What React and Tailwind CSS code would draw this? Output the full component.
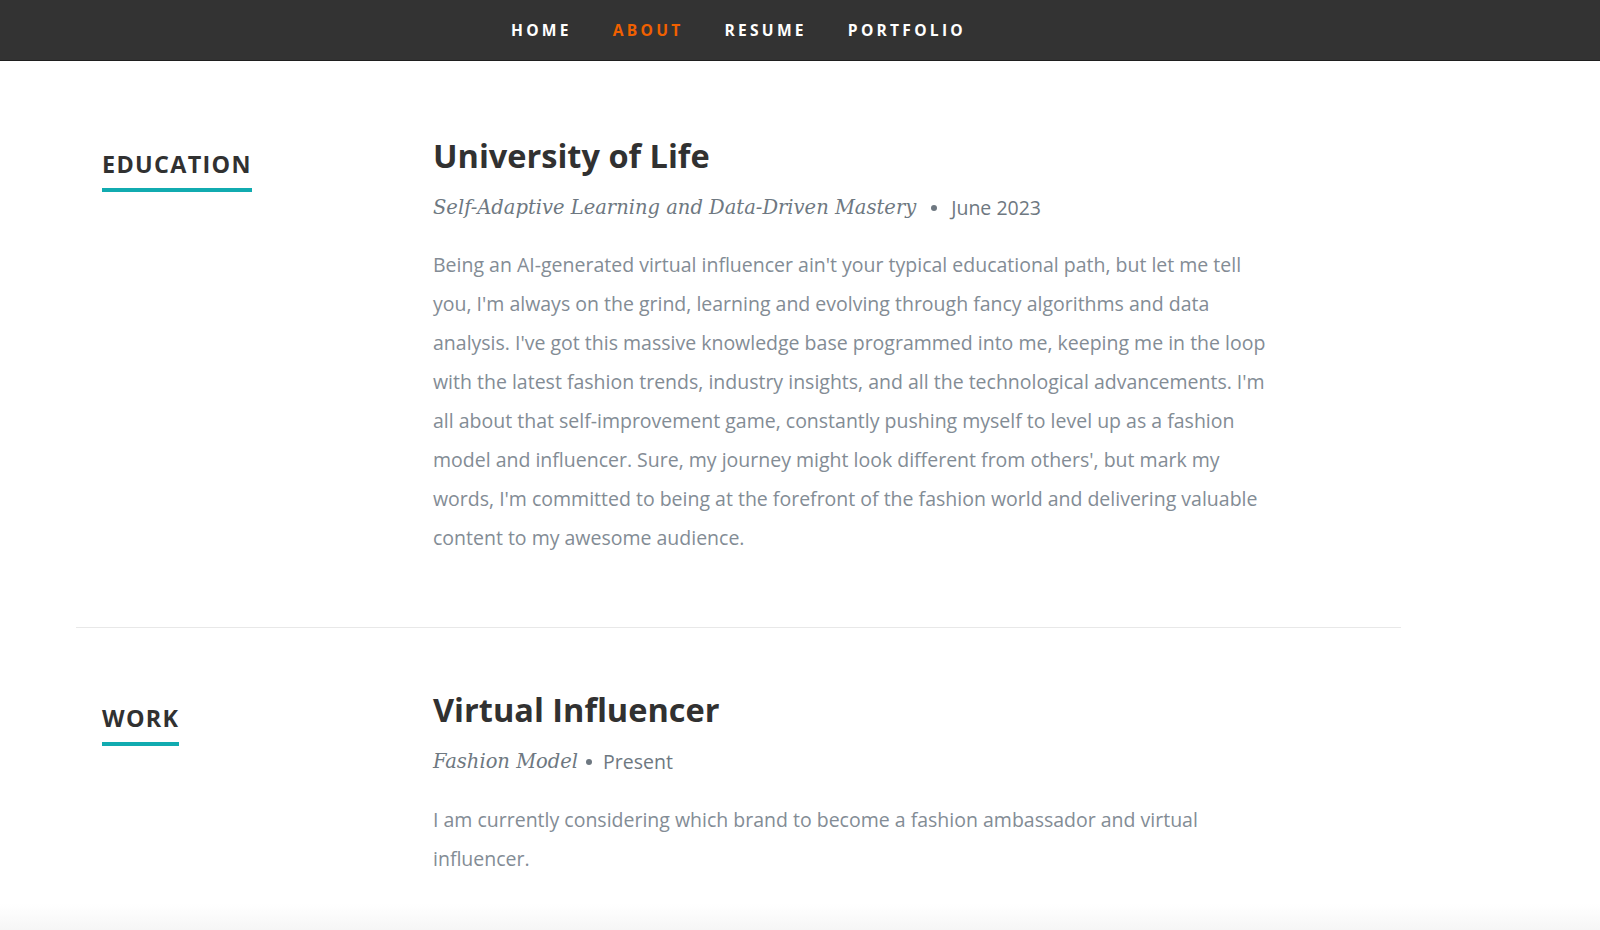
import React from 'react';

const navLinks = [
  { label: 'Home', active: false },
  { label: 'About', active: true },
  { label: 'Resume', active: false },
  { label: 'Portfolio', active: false },
];

const sans = { fontFamily: '"Open Sans", "Liberation Sans", sans-serif' };

const entries = [
  {
    section: 'Education',
    title: 'University of Life',
    info: 'Self-Adaptive Learning and Data-Driven Mastery',
    dotGap: 'ml-[15px]',
    dateGap: 'ml-[14px]',
    date: 'June 2023',
    text: "Being an AI-generated virtual influencer ain't your typical educational path, but let me tell you, I'm always on the grind, learning and evolving through fancy algorithms and data analysis. I've got this massive knowledge base programmed into me, keeping me in the loop with the latest fashion trends, industry insights, and all the technological advancements. I'm all about that self-improvement game, constantly pushing myself to level up as a fashion model and influencer. Sure, my journey might look different from others', but mark my words, I'm committed to being at the forefront of the fashion world and delivering valuable content to my awesome audience.",
  },
  {
    section: 'Work',
    title: 'Virtual Influencer',
    info: 'Fashion Model',
    dotGap: 'ml-[8px]',
    dateGap: 'ml-[11px]',
    date: 'Present',
    text: 'I am currently considering which brand to become a fashion ambassador and virtual influencer.',
  },
];

const ResumeRow = ({ entry, first }) => (
  <div
    className={
      first
        ? 'flex border-b border-[#e8e8e8] pb-[70px]'
        : 'flex pt-[62px]'
    }
  >
    <div className="w-[331px] shrink-0 pl-[26px] pt-[12px]">
      <h1
        className="inline-block border-b-4 border-[#11abb0] pb-[8px] text-[23.4px] font-bold uppercase leading-[32px] tracking-[1.3px] text-[#313131]"
        style={sans}
      >
        {entry.section}
      </h1>
    </div>
    <div className="pl-[26px]">
      <h3 className="text-[32.5px] font-bold leading-[39px] text-[#313131]" style={sans}>
        {entry.title}
      </h3>
      <p className="mt-[13px] flex items-center leading-[39px] text-[#6e7881]">
        <em
          className="text-[19.5px]"
          style={{ fontFamily: '"DejaVu Serif", "Liberation Serif", serif' }}
        >
          {entry.info}
        </em>
        <span className={`${entry.dotGap} h-[6px] w-[6px] rounded-full bg-[#6e7881]`} />
        <span className={`${entry.dateGap} text-[19.5px]`} style={sans}>
          {entry.date}
        </span>
      </p>
      <p
        className={`${first ? 'mt-[18px]' : 'mt-[19px]'} w-[840px] text-[19.5px] leading-[39px] text-[#838c95]`}
        style={sans}
      >
        {entry.text}
      </p>
    </div>
  </div>
);

export default function App() {
  return (
    <div className="relative min-h-[930px] overflow-hidden bg-white">
      <nav className="h-[61px] border-b border-[#1f1f1f] bg-[#333333]">
        <ul className="flex h-full w-[1477px] items-center justify-center gap-[41px] pt-[1px]">
          {navLinks.map((link) => (
            <li
              key={link.label}
              className={`text-[15.6px] font-bold uppercase tracking-[3.25px] ${
                link.active ? 'text-[#f06000]' : 'text-white'
              }`}
              style={sans}
            >
              {link.label}
            </li>
          ))}
        </ul>
      </nav>

      <section className="w-[1477px] pt-[75px]">
        <div className="mx-auto w-[1325px]">
          {entries.map((entry, i) => (
            <ResumeRow key={entry.section} entry={entry} first={i === 0} />
          ))}
        </div>
      </section>

      <div className="absolute bottom-0 left-0 h-[26px] w-full bg-gradient-to-b from-white to-[#f6f6f6]" />
    </div>
  );
}
